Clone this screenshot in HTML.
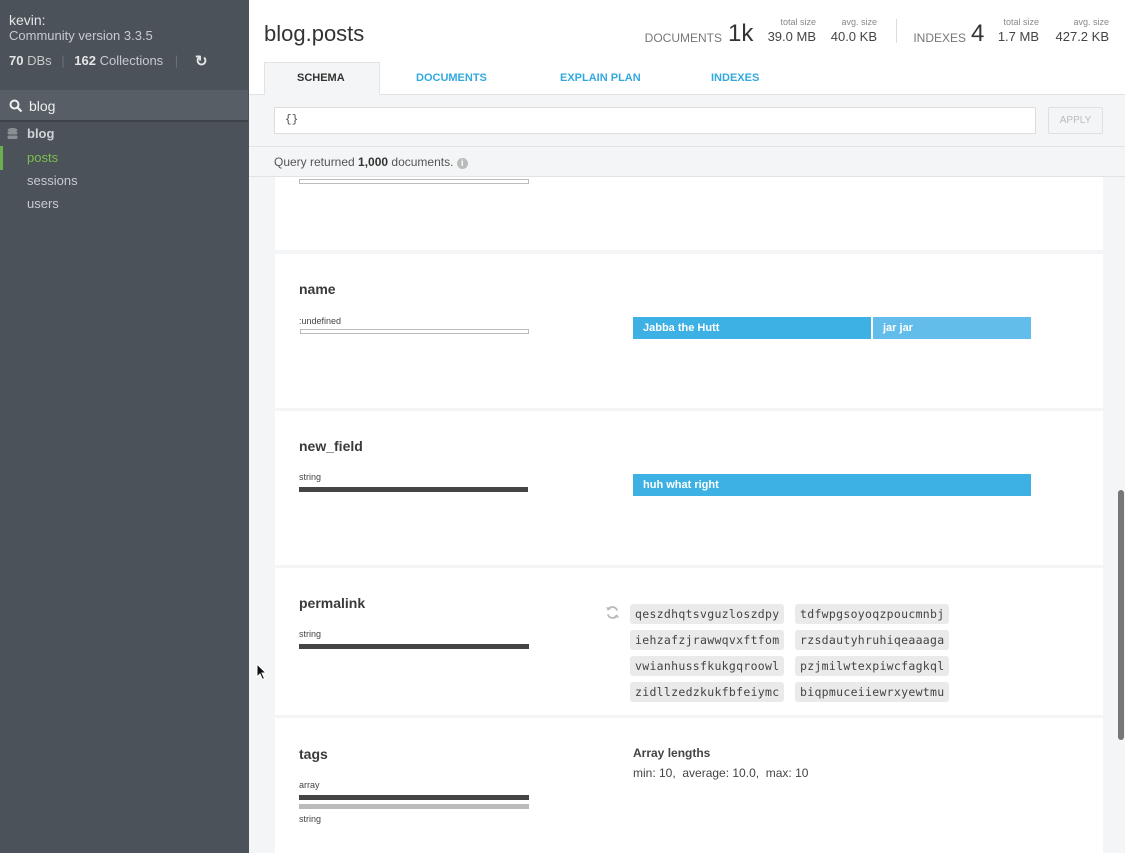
<!DOCTYPE html>
<html><head><style>
*{box-sizing:border-box;margin:0;padding:0}
html,body{width:1125px;height:853px;overflow:hidden}
body{font-family:"Liberation Sans",sans-serif;background:#f4f5f6;position:relative}
.sb{position:absolute;left:0;top:0;width:249px;height:853px;background:#4b5259;color:#c8cbce}
.abs{position:absolute;white-space:nowrap}
.main{position:absolute;left:249px;top:0;width:876px;height:853px}
.card{position:absolute;left:26px;width:828px;background:#fff}
.fn{position:absolute;left:24px;font-size:14px;font-weight:bold;color:#3a3a3a}
.tl{position:absolute;left:24px;font-size:9px;color:#444}
.bar{position:absolute;left:24px;width:230px;height:5px;background:#444}
.pill{position:absolute;height:20px;width:154px;background:#eaeaea;border-radius:3px;font-family:"DejaVu Sans Mono","Liberation Mono",monospace;font-size:11.5px;color:#444;line-height:20px;padding:0 5px;letter-spacing:0.3px}
.tab{position:absolute;top:62px;height:33px;font-size:11px;font-weight:bold;color:#33a9e0;line-height:33px}
.r{position:absolute;white-space:nowrap;text-align:right}
</style></head><body>
<div class="sb">
 <div class="abs" style="left:9px;top:12px;font-size:14px;color:#e4e6e8">kevin:</div>
 <div class="abs" style="left:9px;top:28px;font-size:13px">Community version 3.3.5</div>
 <div class="abs" style="left:9px;top:53px;font-size:13px"><b style="color:#e4e6e8">70</b> DBs <span style="color:#6b7278;margin:0 6px">|</span> <b style="color:#e4e6e8">162</b> Collections <span style="color:#6b7278;margin:0 8px">|</span></div>
 <div class="abs" style="left:195px;top:52px;font-size:15px;font-weight:bold;color:#e4e6e8">&#8635;</div>
 <div class="abs" style="left:0;top:90px;width:248px;height:32px;background:#575e65;border-bottom:2px solid #3e444a"></div>
 <svg class="abs" style="left:9px;top:99px" width="14" height="14" viewBox="0 0 14 14"><circle cx="5.5" cy="5.5" r="4" fill="none" stroke="#eee" stroke-width="2"/><path d="M8.5 8.5L12.5 12.5" stroke="#eee" stroke-width="2.2"/></svg>
 <div class="abs" style="left:29px;top:98px;font-size:14px;color:#eceef0">blog</div>
 <svg class="abs" style="left:7px;top:128px" width="11" height="12" viewBox="0 0 11 12"><ellipse cx="5.5" cy="2" rx="5" ry="2" fill="#8a8f94"/><rect x=".5" y="3.5" width="10" height="3" rx="1.5" fill="#8a8f94"/><rect x=".5" y="7.5" width="10" height="3.5" rx="1.5" fill="#8a8f94"/></svg>
 <div class="abs" style="left:27px;top:126px;font-size:13px;font-weight:bold;color:#d0d3d6">blog</div>
 <div class="abs" style="left:0;top:146px;width:3px;height:24px;background:#6ab04c"></div>
 <div class="abs" style="left:27px;top:150px;font-size:13px;color:#7cbf4e">posts</div>
 <div class="abs" style="left:27px;top:173px;font-size:13px">sessions</div>
 <div class="abs" style="left:27px;top:196px;font-size:13px">users</div>
</div>
<div class="main">
 <div class="abs" style="left:0;top:0;width:876px;height:95px;background:#fff"></div>
 <div class="abs" style="left:15px;top:21px;font-size:22px;color:#333">blog.posts</div>
 <div class="r" style="right:403px;top:31px;font-size:12px;color:#777">DOCUMENTS</div>
 <div class="abs" style="left:479px;top:20px;font-size:24px;color:#333">1k</div>
 <div class="r" style="right:309px;top:17px;font-size:9px;color:#888">total size</div>
 <div class="r" style="right:309px;top:29px;font-size:13px;color:#444">39.0 MB</div>
 <div class="r" style="right:248px;top:17px;font-size:9px;color:#888">avg. size</div>
 <div class="r" style="right:248px;top:29px;font-size:13px;color:#444">40.0 KB</div>
 <div class="abs" style="left:647px;top:19px;width:1px;height:24px;background:#ddd"></div>
 <div class="r" style="right:159px;top:31px;font-size:12px;color:#777">INDEXES</div>
 <div class="abs" style="left:722px;top:20px;font-size:24px;color:#333">4</div>
 <div class="r" style="right:86px;top:17px;font-size:9px;color:#888">total size</div>
 <div class="r" style="right:86px;top:29px;font-size:13px;color:#444">1.7 MB</div>
 <div class="r" style="right:16px;top:17px;font-size:9px;color:#888">avg. size</div>
 <div class="r" style="right:16px;top:29px;font-size:13px;color:#444">427.2 KB</div>
 <div class="abs" style="left:0;top:94px;width:876px;height:1px;background:#e2e3e4"></div>
 <div class="abs" style="left:15px;top:62px;width:116px;height:33px;background:#f4f5f6;border:1px solid #e2e3e4;border-bottom:none"></div>
 <div class="tab" style="left:48px;color:#333">SCHEMA</div>
 <div class="tab" style="left:167px">DOCUMENTS</div>
 <div class="tab" style="left:311px">EXPLAIN PLAN</div>
 <div class="tab" style="left:462px">INDEXES</div>
 <div class="abs" style="left:25px;top:107px;width:762px;height:27px;background:#fff;border:1px solid #ddd;font-family:'Liberation Mono',monospace;font-size:11px;color:#444;padding:6px 10px">{}</div>
 <div class="abs" style="left:799px;top:107px;width:55px;height:27px;border:1px solid #e0e0e0;border-radius:2px;font-size:10px;color:#bbb;text-align:center;line-height:26px">APPLY</div>
 <div class="abs" style="left:0;top:146px;width:876px;height:1px;background:#e2e3e4"></div>
 <div class="abs" style="left:25px;top:155px;font-size:12px;color:#555">Query returned <b style="color:#333">1,000</b> documents. <span style="display:inline-block;width:11px;height:11px;border-radius:50%;background:#bbb;color:#fff;font-size:9px;text-align:center;line-height:11px;font-weight:bold">i</span></div>
 <div class="abs" style="left:0;top:176px;width:876px;height:1px;background:#e2e3e4"></div>

 <div class="card" style="top:177px;height:73px"><div class="abs" style="left:24px;top:2px;width:230px;height:5px;border:1px solid #bbb"></div></div>
 <div class="card" style="top:254px;height:154px">
  <div class="fn" style="top:27px">name</div>
  <div class="tl" style="top:62px">:undefined</div>
  <div class="abs" style="left:25px;top:75px;width:229px;height:5px;border:1px solid #bbb"></div>
  <div class="abs" style="left:358px;top:63px;width:238px;height:22px;background:#3db0e4;color:#fff;font-size:11px;font-weight:bold;line-height:22px;padding-left:10px">Jabba the Hutt</div>
  <div class="abs" style="left:598px;top:63px;width:158px;height:22px;background:#62bdea;color:#fff;font-size:11px;font-weight:bold;line-height:22px;padding-left:10px">jar jar</div>
 </div>
 <div class="card" style="top:411px;height:154px">
  <div class="fn" style="top:27px">new_field</div>
  <div class="tl" style="top:61px">string</div>
  <div class="bar" style="top:76px;width:229px"></div>
  <div class="abs" style="left:358px;top:63px;width:398px;height:22px;background:#3db0e4;color:#fff;font-size:11px;font-weight:bold;line-height:22px;padding-left:10px">huh what right</div>
 </div>
 <div class="card" style="top:568px;height:147px">
  <div class="fn" style="top:27px">permalink</div>
  <div class="tl" style="top:61px">string</div>
  <div class="bar" style="top:76px"></div>
  <svg class="abs" style="left:330px;top:37px" width="15" height="15" viewBox="0 0 16 16"><path d="M13 6A5.5 5.5 0 0 0 3 5" fill="none" stroke="#bbb" stroke-width="2"/><path d="M3 10A5.5 5.5 0 0 0 13 11" fill="none" stroke="#bbb" stroke-width="2"/><path d="M1 2L3 6L6.5 4Z M15 14L13 10L9.5 12Z" fill="#bbb"/></svg>
  <div class="pill" style="left:355px;top:36px">qeszdhqtsvguzloszdpy</div>
  <div class="pill" style="left:520px;top:36px">tdfwpgsoyoqzpoucmnbj</div>
  <div class="pill" style="left:355px;top:62px">iehzafzjrawwqvxftfom</div>
  <div class="pill" style="left:520px;top:62px">rzsdautyhruhiqeaaaga</div>
  <div class="pill" style="left:355px;top:88px">vwianhussfkukgqroowl</div>
  <div class="pill" style="left:520px;top:88px">pzjmilwtexpiwcfagkql</div>
  <div class="pill" style="left:355px;top:114px">zidllzedzkukfbfeiymc</div>
  <div class="pill" style="left:520px;top:114px">biqpmuceiiewrxyewtmu</div>
 </div>
 <div class="card" style="top:718px;height:135px">
  <div class="fn" style="top:28px">tags</div>
  <div class="tl" style="top:62px">array</div>
  <div class="bar" style="top:77px"></div>
  <div class="bar" style="top:86px;background:#bbb"></div>
  <div class="tl" style="top:96px">string</div>
  <div class="abs" style="left:358px;top:28px;font-size:12px;font-weight:bold;color:#444">Array lengths</div>
  <div class="abs" style="left:358px;top:48px;font-size:12px;color:#444">min: 10,&nbsp; average: 10.0,&nbsp; max: 10</div>
 </div>
 <div class="abs" style="left:869px;top:490px;width:6px;height:250px;background:#777;border-radius:3px"></div>
</div>
<svg class="abs" style="left:256px;top:663px" width="12" height="18" viewBox="0 0 12 18"><path d="M1 1L1 14L4 11L6.5 16.5L8.5 15.5L6 10L10 10Z" fill="#111" stroke="#fff" stroke-width="1"/></svg>
</body></html>
